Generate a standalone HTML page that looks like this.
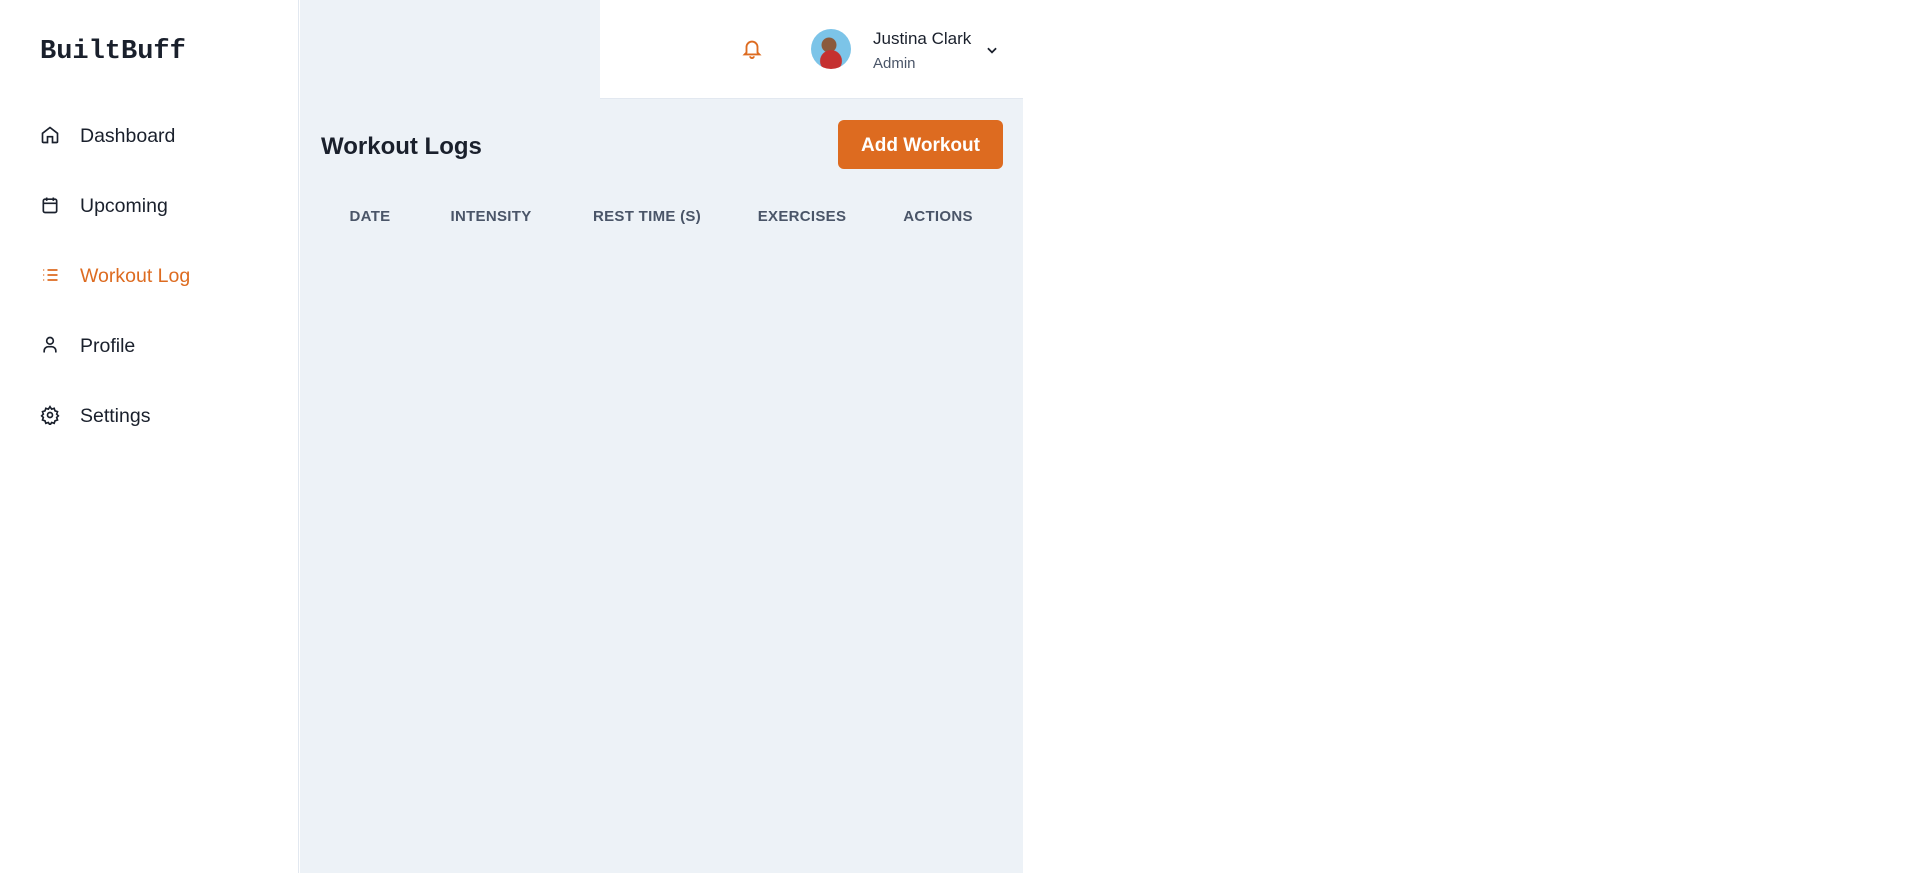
<!DOCTYPE html>
<html><head><meta charset="utf-8"><style>
*{margin:0;padding:0;box-sizing:border-box}
body{width:1919px;height:873px;background:#fff;font-family:"Liberation Sans",sans-serif;position:relative;overflow:hidden;color:#1a202c}
.side{position:absolute;left:0;top:0;width:299px;height:873px;background:#fff;border-right:1px solid #e2e8f0}
.logo{position:absolute;left:40px;top:37px;font-family:"Liberation Mono",monospace;font-weight:bold;font-size:27px;color:#1a202c}
.nav{position:absolute;left:40px;display:flex;align-items:center;font-size:19.5px;color:#1a202c;height:24px}
.nav svg{width:20px;height:20px;margin-right:20px;margin-top:-3px}
.nav.act{color:#dd6b20}
.main{position:absolute;left:300px;top:0;width:723px;height:873px;background:#edf2f7}
.hdr{position:absolute;left:600px;top:0;width:423px;height:99px;background:#fff;border-bottom:1px solid #e2e8f0}
h1{position:absolute;left:321px;top:133px;font-size:24px;font-weight:bold;color:#1a202c}
.btn{position:absolute;left:838px;top:120px;width:165px;height:49px;background:#dd6b20;border-radius:6px;color:#fff;font-weight:bold;font-size:19px;display:flex;align-items:center;justify-content:center;padding-top:3px}
.th{position:absolute;top:208px;font-size:15px;font-weight:bold;color:#4a5568;transform:translateX(-50%);letter-spacing:.3px;white-space:nowrap}
</style></head><body>
<div class="side">
<div class="logo">BuiltBuff</div>
<div class="nav" style="top:124px"><svg viewBox="0 0 24 24" fill="none" stroke="#1a202c" stroke-width="2"><path d="M3 10l9-7 9 7v10a1 1 0 0 1-1 1h-5v-7H9v7H4a1 1 0 0 1-1-1z"/></svg>Dashboard</div>
<div class="nav" style="top:194px"><svg viewBox="0 0 24 24" fill="none" stroke="#1a202c" stroke-width="2"><rect x="4" y="5" width="16" height="16" rx="2"/><path d="M4 10h16M8 3v4M16 3v4"/></svg>Upcoming</div>
<div class="nav act" style="top:264px"><svg viewBox="0 0 24 24" fill="none" stroke="#dd6b20" stroke-width="2"><path d="M9 6h12M9 12h12M9 18h12M4 6h1M4 12h1M4 18h1"/></svg>Workout Log</div>
<div class="nav" style="top:334px"><svg viewBox="0 0 24 24" fill="none" stroke="#1a202c" stroke-width="2"><circle cx="12" cy="7" r="4"/><path d="M5 21v-2a5 5 0 0 1 5-5h4a5 5 0 0 1 5 5v2"/></svg>Profile</div>
<div class="nav" style="top:404px"><svg viewBox="0 0 24 24" fill="none" stroke="#1a202c" stroke-width="2"><circle cx="12" cy="12" r="3"/><path d="M12 2l2 3 3-1 1 3 3 1-1 3 2 2-2 2 1 3-3 1-1 3-3-1-2 3-2-3-3 1-1-3-3-1 1-3-2-2 2-2-1-3 3-1 1-3 3 1z"/></svg>Settings</div>
</div>
<div class="main"></div>
<div class="hdr">
<svg style="position:absolute;left:141px;top:36px" width="22" height="24" viewBox="0 0 24 24" fill="none" stroke="#dd6b20" stroke-width="2"><path d="M6 17V11a6 6 0 0 1 12 0v6l2 2H4z"/><path d="M10 21a2 2 0 0 0 4 0"/></svg>
<div style="position:absolute;left:211px;top:29px;width:40px;height:40px;border-radius:50%;background:radial-gradient(circle at 50% 80%,#c53030 28%,transparent 30%),radial-gradient(circle at 45% 40%,#8b5a3c 22%,#7cc4e8 24%)"></div>
<div style="position:absolute;left:273px;top:29px;font-size:17px;color:#1a202c">Justina Clark</div>
<div style="position:absolute;left:273px;top:55px;font-size:15px;color:#4a5568">Admin</div>
<svg style="position:absolute;left:385px;top:43px" width="14" height="14" viewBox="0 0 24 24" fill="none" stroke="#1a202c" stroke-width="3"><path d="M5 9l7 7 7-7"/></svg>
</div>
<h1>Workout Logs</h1>
<div class="btn">Add Workout</div>
<div class="th" style="left:370px">DATE</div>
<div class="th" style="left:491px">INTENSITY</div>
<div class="th" style="left:647px">REST TIME (S)</div>
<div class="th" style="left:802px">EXERCISES</div>
<div class="th" style="left:938px">ACTIONS</div>
</body></html>
